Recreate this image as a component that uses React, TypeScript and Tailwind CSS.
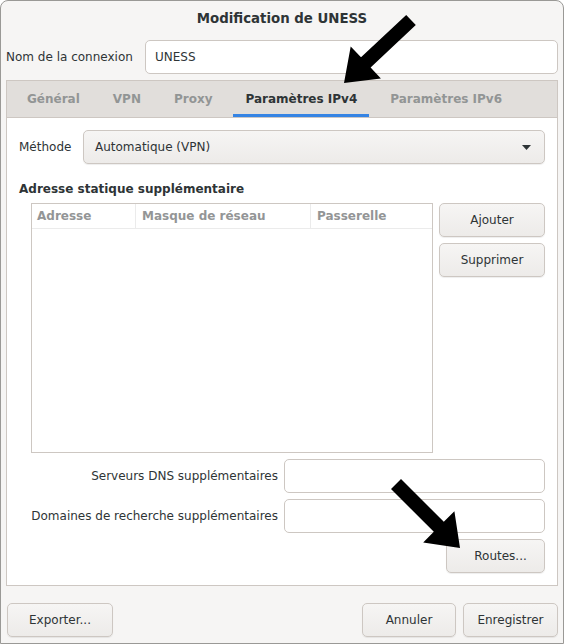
import React from 'react';

const btn =
  'h-[34px] rounded-[5px] border border-[#cdc7c2] bg-gradient-to-b from-[#f6f5f4] to-[#edebe9] shadow-[0_1px_1px_rgba(0,0,0,0.07)] text-[#2e3436] flex items-center justify-center';

const entry = 'h-[34px] rounded-[5px] border border-[#cdc7c2] bg-white';

const tabs = ['Général', 'VPN', 'Proxy', 'Paramètres IPv4', 'Paramètres IPv6'];

const App = () => {
  return (
    <div className="relative w-[564px] h-[644px] overflow-hidden font-['DejaVu_Sans',sans-serif] text-[12px] leading-[15px] text-[#2e3436]">
      <div className="w-full h-full flex flex-col bg-[#f6f5f4] border border-[#9a9996] rounded-t-[8px]">
        {/* Title */}
        <div className="h-[32px] pt-[2px] flex items-center justify-center font-bold text-[13.33px] text-[#2e3436]">
          Modification de UNESS
        </div>

        {/* Connection name */}
        <div className="mt-[7px] px-[5px] flex items-center justify-between">
          <span>Nom de la connexion</span>
          <div className={`${entry} w-[413px] flex items-center pl-[9px]`}>UNESS</div>
        </div>

        {/* Notebook */}
        <div className="mt-[6px] mx-[5px] border border-[#cdc7c2] flex flex-col">
          <div className="h-[37px] bg-[#e1dedb] border-b border-[#cdc7c2] flex items-stretch pl-[8px] gap-[9px]">
            {tabs.map((t) => (
              <div
                key={t}
                className={
                  t === 'Paramètres IPv4'
                    ? 'px-[12px] flex items-center font-bold text-[#2e3436] border-b-[3px] border-[#3584e4] pt-[3px]'
                    : 'px-[12px] flex items-center font-bold text-[#929595]'
                }
              >
                {t}
              </div>
            ))}
          </div>

          <div className="bg-white px-[12px] pt-[12px] pb-[12px] flex flex-col">
            {/* Method */}
            <div className="flex items-center justify-between">
              <span>Méthode</span>
              <div className={`${btn} w-[462px] !justify-between pl-[11px] pr-[13px]`}>
                <span>Automatique (VPN)</span>
                <svg width="9" height="5" viewBox="0 0 9 5">
                  <path d="M0 0h9L4.5 5z" fill="#2e3436" />
                </svg>
              </div>
            </div>

            <div className="mt-[18px] font-bold">Adresse statique supplémentaire</div>

            {/* Table + buttons */}
            <div className="mt-[6px] ml-[12px] h-[250px] flex gap-[6px]">
              <div className="w-[402px] h-full border border-[#cdc7c2] bg-white flex flex-col">
                <div className="h-[25px] flex border-b border-[#ebebeb] font-bold text-[#939596]">
                  <div className="w-[104px] border-r border-[#ebebeb] pl-[5px] flex items-center">Adresse</div>
                  <div className="w-[175px] border-r border-[#ebebeb] pl-[6px] flex items-center">Masque de réseau</div>
                  <div className="flex-1 pl-[6px] flex items-center">Passerelle</div>
                </div>
              </div>
              <div className="flex flex-col gap-[6px]">
                <button className={`${btn} w-[106px]`}>Ajouter</button>
                <button className={`${btn} w-[106px]`}>Supprimer</button>
              </div>
            </div>

            {/* DNS */}
            <div className="mt-[6px] flex items-center justify-end gap-[6px]">
              <span>Serveurs DNS supplémentaires</span>
              <div className={`${entry} w-[261px]`} />
            </div>
            <div className="mt-[6px] flex items-center justify-end gap-[6px]">
              <span>Domaines de recherche supplémentaires</span>
              <div className={`${entry} w-[261px]`} />
            </div>

            <div className="mt-[6px] flex justify-end">
              <button className={`${btn} w-[99px] pl-[10px]`}>Routes...</button>
            </div>
          </div>
        </div>

        {/* Footer */}
        <div className="mt-[17px] px-[5px] flex items-center">
          <button className={`${btn} w-[106px] ml-[1px]`}>Exporter...</button>
          <div className="ml-auto flex gap-[7px]">
            <button className={`${btn} w-[94px]`}>Annuler</button>
            <button className={`${btn} w-[95px]`}>Enregistrer</button>
          </div>
        </div>
      </div>

      {/* Annotation arrows */}
      <svg className="absolute inset-0 pointer-events-none" width="564" height="644" viewBox="0 0 564 644">
        <polygon
          points="406.2,14.9 415.8,25.1 370.6,67.5 380.9,78.4 344,83 350.7,46.4 361,57.3"
          fill="#000"
        />
        <polygon
          points="401,479 443.8,521.8 454.4,511.2 460,548 423.2,542.4 433.8,531.8 391,489"
          fill="#000"
        />
      </svg>
    </div>
  );
};

export default App;
